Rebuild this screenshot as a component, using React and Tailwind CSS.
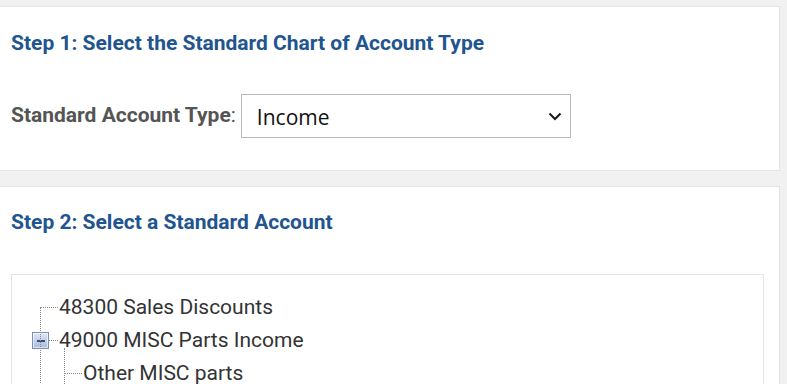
import React from 'react';

const dots = 'border-dotted border-[#8a8a8a]';

function TreeRow({ indent, link, expander, children }) {
  return (
    <li className="flex h-[33px] items-center">
      <span style={{ width: indent }} className="shrink-0" />
      {expander}
      <span style={{ width: link }} className={`mr-[1px] shrink-0 border-t ${dots}`} />
      <span className="whitespace-nowrap">{children}</span>
    </li>
  );
}

function Expander() {
  return (
    <span className="flex h-[17px] w-[17px] shrink-0 items-center justify-center border border-[#7b90b8] bg-gradient-to-b from-[#dfe7f5] to-[#a9bbdb] shadow-[inset_0_0_0_1px_#ffffff99]">
      <span className="h-[2px] w-[8px] bg-[#3a4f7a]" />
    </span>
  );
}

export default function App() {
  return (
    <div className="min-h-screen w-[787px] overflow-hidden bg-[#f1f1f1] pt-[6px] pr-[7px] font-['Roboto',sans-serif]">
      {/* Step 1 */}
      <section className="h-[165px] border border-l-0 border-[#e4e4e4] bg-white pl-[11px] pt-[22px]">
        <h2 className="text-[21px] font-bold leading-[28px] text-[#22558f]">
          Step 1: Select the Standard Chart of Account Type
        </h2>
        <div className="mt-[37px] flex items-center">
          <label className="text-[21px] font-bold text-[#555555]">
            Standard Account Type<span className="font-normal">:</span>
          </label>
          <div className="ml-[5px] flex h-[44px] w-[330px] items-center justify-between border border-[#b9b9b9] pl-[15px] pr-[8px]">
            <span className="pt-[3px] font-['Open_Sans',sans-serif] text-[21px] text-[#111111]">Income</span>
            <svg width="14" height="9" viewBox="0 0 14 9" fill="none">
              <path d="M1.5 1.5 L7 7 L12.5 1.5" stroke="#1a1a1a" strokeWidth="2" />
            </svg>
          </div>
        </div>
      </section>

      {/* Step 2 */}
      <section className="mt-[15px] h-[200px] border border-l-0 border-b-0 border-[#e4e4e4] bg-white pl-[11px] pr-[15px] pt-[21px]">
        <h2 className="text-[21px] font-bold leading-[28px] text-[#22558f]">
          Step 2: Select a Standard Account
        </h2>
        <div className="mt-[38px] h-[200px] border border-[#e4e4e4] pt-[16px] text-[21px] text-[#333333]">
          <ul className="relative">
            {/* trunk connectors */}
            <span className={`absolute left-[28px] top-[16px] h-[200px] border-l ${dots}`} />
            <span className={`absolute left-[52px] top-[57px] h-[200px] border-l ${dots}`} />
            <TreeRow indent={28} link={18}>48300 Sales Discounts</TreeRow>
            <TreeRow indent={20} link={9} expander={<Expander />}>49000 MISC Parts Income</TreeRow>
            <TreeRow indent={52} link={18}>Other MISC parts</TreeRow>
          </ul>
        </div>
      </section>
    </div>
  );
}
